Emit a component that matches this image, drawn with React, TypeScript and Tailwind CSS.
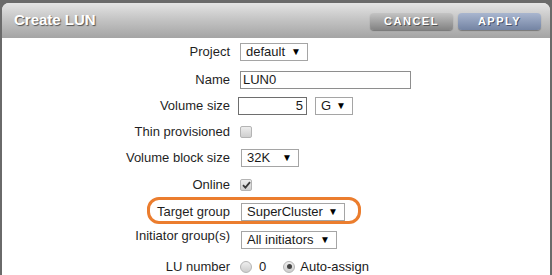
import React from "react";

const font = { fontFamily: '"Liberation Sans", Arial, sans-serif' };

function Select({ value, width }: { value: string; width: string }) {
  return (
    <div
      className={`flex h-[18px] items-center justify-between border border-[#a5a5a5] bg-white pl-[5px] pr-[6px] text-[13px] text-[#1a1a1a] ${width}`}
    >
      <span>{value}</span>
      <span className="text-[10px] leading-none text-black">▼</span>
    </div>
  );
}

function Checkbox({ checked }: { checked?: boolean }) {
  return (
    <div className="flex h-[12px] w-[12px] items-center justify-center rounded-[2px] border border-[#b4b4b4] bg-gradient-to-b from-[#ededed] to-[#cfcfcf]">
      {checked && (
        <svg width="9" height="8" viewBox="0 0 9 8">
          <path d="M1 4.2 L3.4 6.6 L8 1.2" stroke="#3a3a3a" strokeWidth="1.8" fill="none" />
        </svg>
      )}
    </div>
  );
}

function Radio({ checked }: { checked?: boolean }) {
  return (
    <div className="flex h-[12px] w-[12px] items-center justify-center rounded-full border border-[#b4b4b4] bg-gradient-to-b from-[#efefef] to-[#cdcdcd]">
      {checked && <div className="h-[5px] w-[5px] rounded-full bg-[#444]" />}
    </div>
  );
}

function Row({
  label,
  h,
  labelClass = "",
  children,
}: {
  label: string;
  h: string;
  labelClass?: string;
  children: React.ReactNode;
}) {
  return (
    <div className={`grid grid-cols-[228px_1fr] items-center gap-x-[10px] ${h}`}>
      <div className={`text-right text-[13px] text-[#1f1f1f] ${labelClass}`}>{label}</div>
      <div className="flex items-center">{children}</div>
    </div>
  );
}

export default function App() {
  return (
    <div className="relative h-[275px] w-[552px] overflow-hidden bg-[#6a6a6a] pl-[2px] pt-[3px]" style={font}>
      <div className="h-full w-[548px] overflow-hidden rounded-t-[7px] bg-white">
        {/* header */}
        <div className="flex h-[35px] items-center justify-between bg-gradient-to-b from-[#e4e4e4] via-[#c2c2c2] to-[#a4a4a4] pl-[12px] pr-[9px]">
          <h1 className="text-[15px] font-bold text-white [text-shadow:1px_1px_1px_#555]">Create LUN</h1>
          <div className="flex gap-[5px] pt-[1px]">
            <button className="h-[17px] w-[83px] rounded-[4px] bg-gradient-to-b from-[#c4c4c4] to-[#838383] text-[11px] font-bold tracking-[1.5px] text-white shadow-[0_1px_1px_#777] [text-shadow:1px_1px_0_#555]">
              CANCEL
            </button>
            <button className="h-[17px] w-[83px] rounded-[4px] bg-gradient-to-b from-[#a9b6cf] to-[#7484a3] text-[11px] font-bold tracking-[1.5px] text-white shadow-[0_1px_1px_#777] [text-shadow:1px_1px_0_#4a5570]">
              APPLY
            </button>
          </div>
        </div>

        {/* form */}
        <div className="flex flex-col">
          <Row label="Project" h="h-[28px]">
            <Select value="default" width="w-[68px]" />
          </Row>
          <Row label="Name" h="h-[27px]">
            <div className="flex h-[18px] w-[171px] items-center border border-[#8e8e8e] bg-white px-[2px] text-[13px] text-[#1a1a1a]">
              LUN0
            </div>
          </Row>
          <Row label="Volume size" h="h-[26px]">
            <div className="ml-[-2px] flex h-[18px] w-[69px] items-center justify-end border border-[#6e6e6e] bg-white px-[3px] text-[13px] text-[#1a1a1a]">
              5
            </div>
            <div className="ml-[8px]">
              <Select value="G" width="w-[38px]" />
            </div>
          </Row>
          <Row label="Thin provisioned" h="h-[26px]">
            <Checkbox />
          </Row>
          <Row label="Volume block size" h="h-[26px]">
            <div className="ml-[1px]">
              <Select value="32K" width="w-[58px]" />
            </div>
          </Row>
          <Row label="Online" h="h-[27px]">
            <Checkbox checked />
          </Row>
          <Row label="Target group" h="h-[28px]">
            <div className="ml-[1px]">
              <Select value="SuperCluster" width="w-[104px]" />
            </div>
          </Row>
          <Row label="Initiator group(s)" h="h-[28px]" labelClass="mt-[-8px]">
            <div className="ml-[1px]">
              <Select value="All initiators" width="w-[96px]" />
            </div>
          </Row>
          <Row label="LU number" h="h-[25px]">
            <Radio />
            <span className="ml-[7px] text-[13px] text-[#1a1a1a]">0</span>
            <div className="ml-[17px]">
              <Radio checked />
            </div>
            <span className="ml-[5px] text-[13px] text-[#1a1a1a]">Auto-assign</span>
          </Row>
        </div>
      </div>

      {/* highlight annotation */}
      <div className="absolute left-[147px] top-[197px] h-[27px] w-[214px] rounded-[12px] border-[3px] border-[#eb7d2e]" />
    </div>
  );
}
